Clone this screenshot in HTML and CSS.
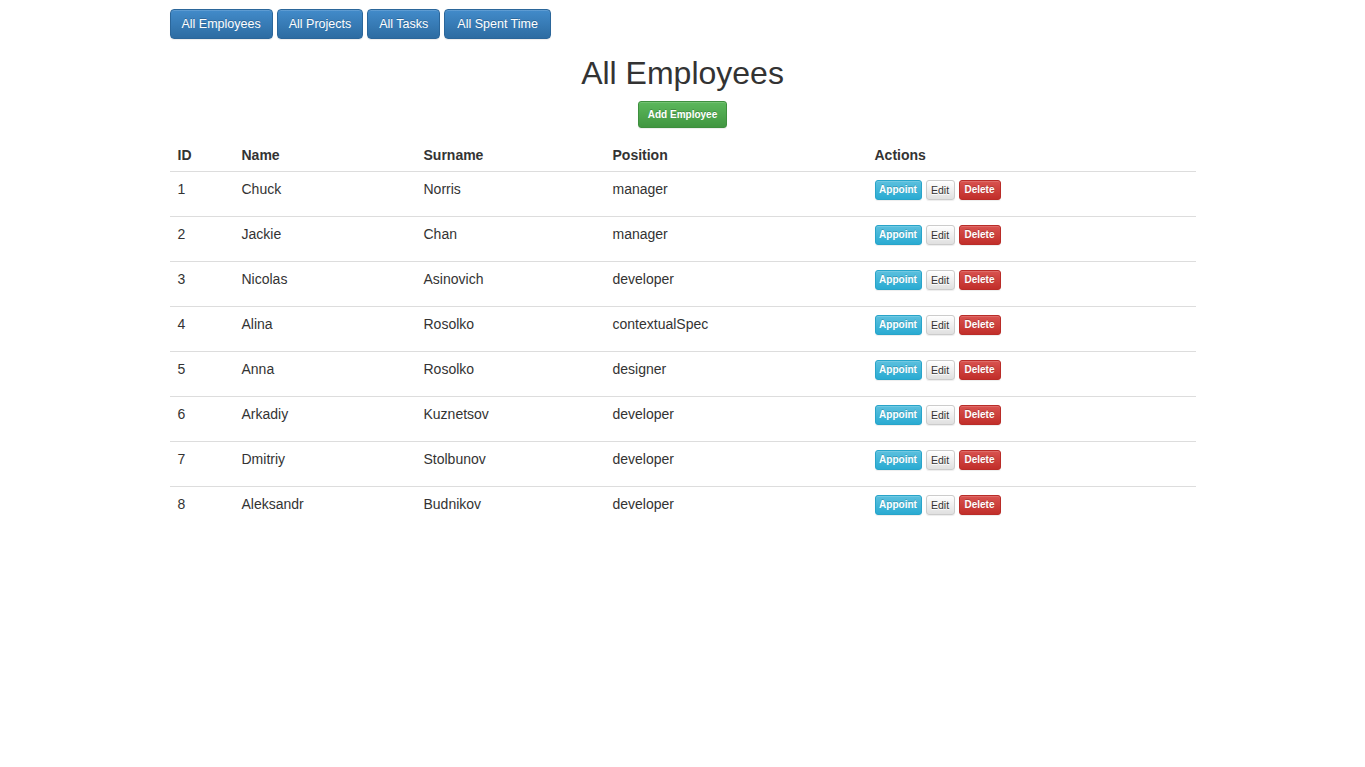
FILE: index.html
```html
<!DOCTYPE html>
<html lang="en">
<head>
<meta charset="utf-8">
<title>All Employees</title>
<link rel="stylesheet" href="styles.css">
</head>
<body>
<div class="container">
  <nav class="nav">
    <a class="btn btn-primary nav-btn" href="#">All Employees</a>
    <a class="btn btn-primary nav-btn" href="#">All Projects</a>
    <a class="btn btn-primary nav-btn" href="#">All Tasks</a>
    <a class="btn btn-primary nav-btn" href="#">All Spent Time</a>
  </nav>
  <h1 class="title">All Employees</h1>
  <div class="add-row"><a class="btn btn-success add-btn" href="#">Add Employee</a></div>
  <table class="table">
    <colgroup>
      <col class="c-id"><col class="c-name"><col class="c-surname"><col class="c-pos"><col class="c-act">
    </colgroup>
    <thead>
      <tr><th>ID</th><th>Name</th><th>Surname</th><th>Position</th><th>Actions</th></tr>
    </thead>
    <tbody>
      <tr><td>1</td><td>Chuck</td><td>Norris</td><td>manager</td><td class="act-cell"><div class="actions"><a class="btn btn-info act appoint" href="#">Appoint</a><a class="btn btn-default act edit" href="#">Edit</a><a class="btn btn-danger act delete" href="#">Delete</a></div></td></tr>
      <tr><td>2</td><td>Jackie</td><td>Chan</td><td>manager</td><td class="act-cell"><div class="actions"><a class="btn btn-info act appoint" href="#">Appoint</a><a class="btn btn-default act edit" href="#">Edit</a><a class="btn btn-danger act delete" href="#">Delete</a></div></td></tr>
      <tr><td>3</td><td>Nicolas</td><td>Asinovich</td><td>developer</td><td class="act-cell"><div class="actions"><a class="btn btn-info act appoint" href="#">Appoint</a><a class="btn btn-default act edit" href="#">Edit</a><a class="btn btn-danger act delete" href="#">Delete</a></div></td></tr>
      <tr><td>4</td><td>Alina</td><td>Rosolko</td><td>contextualSpec</td><td class="act-cell"><div class="actions"><a class="btn btn-info act appoint" href="#">Appoint</a><a class="btn btn-default act edit" href="#">Edit</a><a class="btn btn-danger act delete" href="#">Delete</a></div></td></tr>
      <tr><td>5</td><td>Anna</td><td>Rosolko</td><td>designer</td><td class="act-cell"><div class="actions"><a class="btn btn-info act appoint" href="#">Appoint</a><a class="btn btn-default act edit" href="#">Edit</a><a class="btn btn-danger act delete" href="#">Delete</a></div></td></tr>
      <tr><td>6</td><td>Arkadiy</td><td>Kuznetsov</td><td>developer</td><td class="act-cell"><div class="actions"><a class="btn btn-info act appoint" href="#">Appoint</a><a class="btn btn-default act edit" href="#">Edit</a><a class="btn btn-danger act delete" href="#">Delete</a></div></td></tr>
      <tr><td>7</td><td>Dmitriy</td><td>Stolbunov</td><td>developer</td><td class="act-cell"><div class="actions"><a class="btn btn-info act appoint" href="#">Appoint</a><a class="btn btn-default act edit" href="#">Edit</a><a class="btn btn-danger act delete" href="#">Delete</a></div></td></tr>
      <tr><td>8</td><td>Aleksandr</td><td>Budnikov</td><td>developer</td><td class="act-cell"><div class="actions"><a class="btn btn-info act appoint" href="#">Appoint</a><a class="btn btn-default act edit" href="#">Edit</a><a class="btn btn-danger act delete" href="#">Delete</a></div></td></tr>
    </tbody>
  </table>
</div>
</body>
</html>
```

FILE: styles.css
```css
html, body {
  margin: 0;
  padding: 0;
  background: #fff;
}
body {
  font-family: "Liberation Sans", Arial, Helvetica, sans-serif;
  font-size: 14px;
  line-height: 20px;
  color: #333;
}
.container {
  width: 1026px;
  margin: 0 auto;
  padding-top: 9px;
}
.btn {
  display: inline-block;
  box-sizing: border-box;
  text-decoration: none;
  text-align: center;
  white-space: nowrap;
  border: 1px solid transparent;
  border-radius: 4px;
  color: #fff;
  box-shadow: inset 0 1px 0 rgba(255,255,255,.15), 0 1px 1px rgba(0,0,0,.075);
}
.btn-primary {
  background-image: linear-gradient(to bottom, #428bca 0, #2d6ca2 100%);
  border-color: #2b669a;
  text-shadow: 0 -1px 0 rgba(0,0,0,.2);
}
.btn-success {
  background-image: linear-gradient(to bottom, #5cb85c 0, #419641 100%);
  border-color: #3e8f3e;
  text-shadow: 0 -1px 0 rgba(0,0,0,.2);
}
.btn-info {
  background-image: linear-gradient(to bottom, #5bc0de 0, #2aabd2 100%);
  border-color: #28a4c9;
  text-shadow: 0 -1px 0 rgba(0,0,0,.2);
}
.btn-danger {
  background-image: linear-gradient(to bottom, #d9534f 0, #c12e2a 100%);
  border-color: #b92c28;
  text-shadow: 0 -1px 0 rgba(0,0,0,.2);
}
.btn-default {
  background-image: linear-gradient(to bottom, #fff 0, #e0e0e0 100%);
  border-color: #ccc;
  color: #333;
  text-shadow: 0 1px 0 #fff;
}
.nav {
  display: flex;
  gap: 4px;
}
.nav-btn {
  font-size: 12.5px;
  line-height: 18px;
  padding: 5px 11px;
  height: 30px;
}
.nav-btn:last-child {
  padding: 5px 12px;
}
.title {
  margin: 17px 0 10px;
  font-size: 32px;
  font-weight: 500;
  line-height: 35px;
  text-align: center;
  color: #333;
}
.add-row {
  display: flex;
  justify-content: center;
}
.add-btn {
  font-size: 10px;
  font-weight: bold;
  line-height: 15px;
  padding: 5px 9px;
  height: 27px;
  border-radius: 3px;
}
.table {
  width: 100%;
  margin-top: 7px;
  border-collapse: collapse;
  table-layout: fixed;
}
.c-id { width: 64px; }
.c-name { width: 182px; }
.c-surname { width: 189px; }
.c-pos { width: 262px; }
.c-act { width: 329px; }
.table th {
  text-align: left;
  font-weight: bold;
  padding: 10px 8px 6px;
  border-bottom: 1px solid #ddd;
}
.table td {
  height: 20px;
  padding: 7px 8px 17px;
  vertical-align: top;
  border-bottom: 1px solid #ddd;
}
.table td.act-cell {
  padding-top: 8px;
  padding-bottom: 16px;
}
.table tbody tr:last-child td {
  border-bottom: 0;
}
.actions {
  display: flex;
  gap: 4px;
}
.act {
  font-size: 10px;
  font-weight: bold;
  line-height: 18px;
  height: 20px;
  padding: 0;
  border-radius: 3px;
}
.appoint { width: 47px; }
.edit { width: 29px; font-size: 10.5px; font-weight: normal; }
.delete { width: 42px; }
```
